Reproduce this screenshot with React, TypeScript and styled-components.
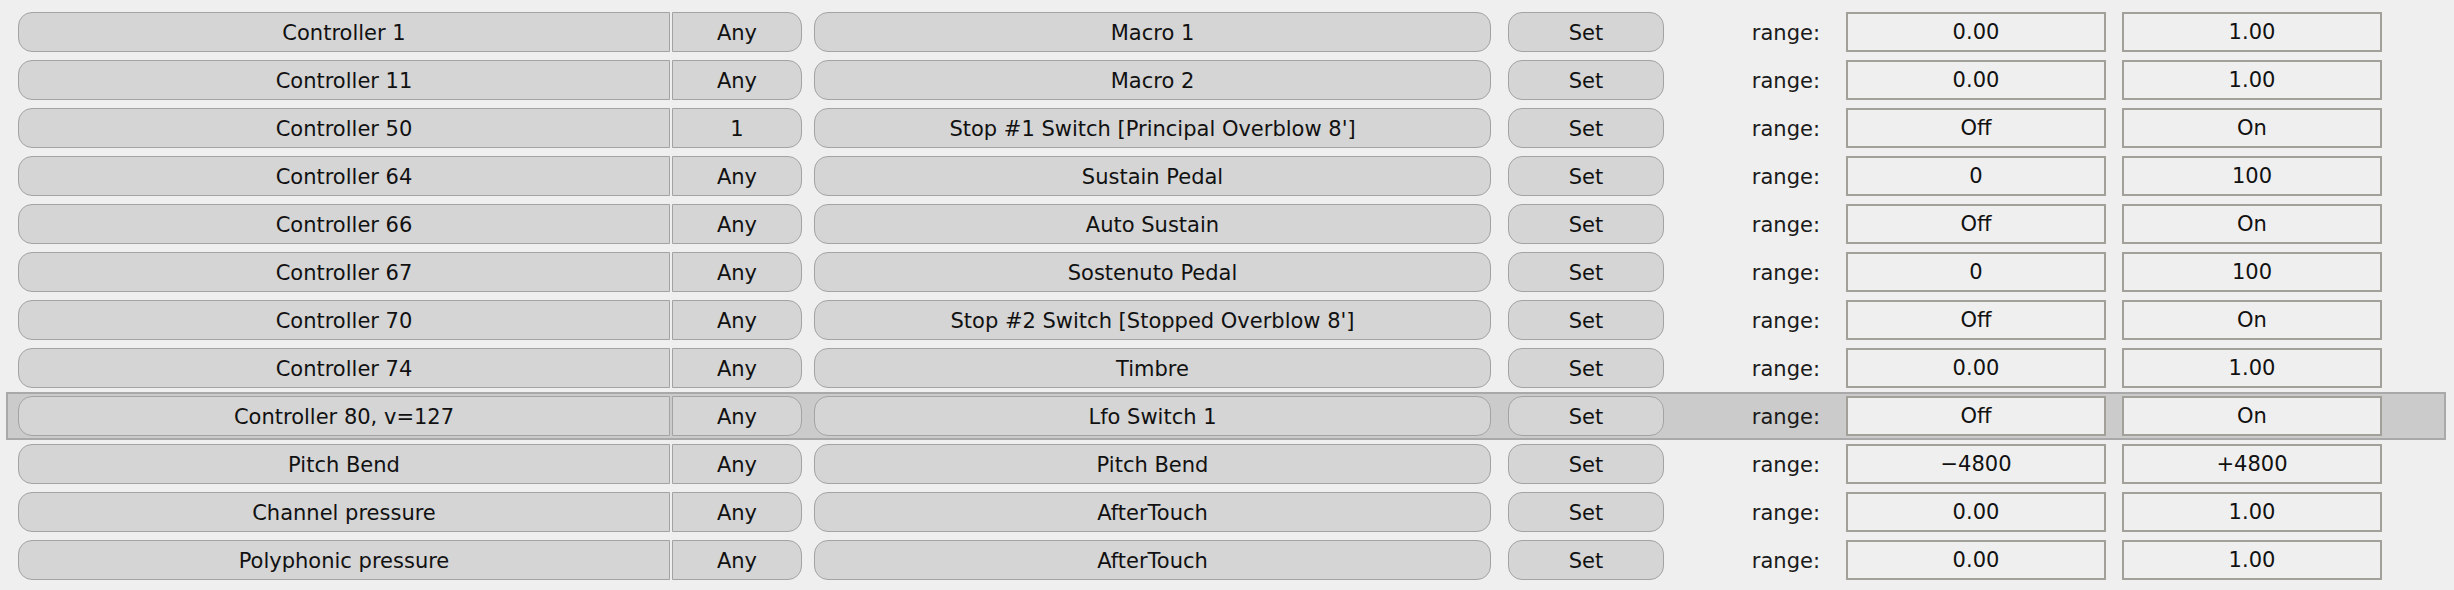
import React from "react";
import styled, { createGlobalStyle } from "styled-components";

const GlobalStyle = createGlobalStyle`
  html, body {
    margin: 0;
    padding: 0;
    background: #efefef;
  }
  body {
    font-family: "DejaVu Sans", "Liberation Sans", sans-serif;
  }
`;

const Page = styled.div`
  display: flex;
  flex-direction: column;
  padding: 8px 0 0 6px;
  width: 2454px;
  height: 590px;
  box-sizing: border-box;
  background: #efefef;
`;

const Row = styled.div<{ $selected?: boolean }>`
  display: flex;
  align-items: center;
  box-sizing: border-box;
  width: 2440px;
  height: 48px;
  padding: 2px 0 2px 10px;
  border: 2px solid ${(p) => (p.$selected ? "#a9a9a9" : "transparent")};
  background: ${(p) => (p.$selected ? "#cbcbcb" : "transparent")};
`;

const BaseButton = styled.button`
  box-sizing: border-box;
  height: 40px;
  margin: 0;
  padding: 2px 0 0 0;
  border: 1px solid #a3a3a3;
  background: #d5d5d5;
  color: #111111;
  font-family: "DejaVu Sans", "Liberation Sans", sans-serif;
  font-size: 21px;
  line-height: 36px;
  text-align: center;
  white-space: nowrap;
  flex: none;
`;

const SourceButton = styled(BaseButton)`
  width: 652px;
  border-radius: 14px 0 0 14px;
`;

const ChannelButton = styled(BaseButton)`
  width: 130px;
  margin-left: 2px;
  border-radius: 0 14px 14px 0;
`;

const TargetButton = styled(BaseButton)`
  width: 677px;
  margin-left: 12px;
  border-radius: 14px;
`;

const SetButton = styled(BaseButton)`
  width: 156px;
  margin-left: 17px;
  border-radius: 14px;
`;

const RangeLabel = styled.span`
  box-sizing: border-box;
  width: 182px;
  padding: 2px 26px 0 0;
  text-align: right;
  font-size: 21px;
  color: #1a1a1a;
  flex: none;
`;

const RangeBox = styled.div<{ $gap?: number }>`
  box-sizing: border-box;
  width: 260px;
  height: 40px;
  margin-left: ${(p) => p.$gap ?? 0}px;
  padding-top: 1px;
  border: 2px solid #a39f99;
  background: #efefef;
  color: #111111;
  font-size: 21px;
  line-height: 35px;
  text-align: center;
  flex: none;
`;

type Mapping = {
  source: string;
  channel: string;
  target: string;
  min: string;
  max: string;
};

const mappings: Mapping[] = [
  { source: "Controller 1", channel: "Any", target: "Macro 1", min: "0.00", max: "1.00" },
  { source: "Controller 11", channel: "Any", target: "Macro 2", min: "0.00", max: "1.00" },
  { source: "Controller 50", channel: "1", target: "Stop #1 Switch [Principal Overblow 8']", min: "Off", max: "On" },
  { source: "Controller 64", channel: "Any", target: "Sustain Pedal", min: "0", max: "100" },
  { source: "Controller 66", channel: "Any", target: "Auto Sustain", min: "Off", max: "On" },
  { source: "Controller 67", channel: "Any", target: "Sostenuto Pedal", min: "0", max: "100" },
  { source: "Controller 70", channel: "Any", target: "Stop #2 Switch [Stopped Overblow 8']", min: "Off", max: "On" },
  { source: "Controller 74", channel: "Any", target: "Timbre", min: "0.00", max: "1.00" },
  { source: "Controller 80, v=127", channel: "Any", target: "Lfo Switch 1", min: "Off", max: "On" },
  { source: "Pitch Bend", channel: "Any", target: "Pitch Bend", min: "\u22124800", max: "+4800" },
  { source: "Channel pressure", channel: "Any", target: "AfterTouch", min: "0.00", max: "1.00" },
  { source: "Polyphonic pressure", channel: "Any", target: "AfterTouch", min: "0.00", max: "1.00" },
];

const SELECTED = 8;

export default function App() {
  return (
    <>
      <GlobalStyle />
      <Page>
        {mappings.map((m, i) => (
          <Row key={i} $selected={i === SELECTED}>
            <SourceButton>{m.source}</SourceButton>
            <ChannelButton>{m.channel}</ChannelButton>
            <TargetButton>{m.target}</TargetButton>
            <SetButton>Set</SetButton>
            <RangeLabel>range:</RangeLabel>
            <RangeBox>{m.min}</RangeBox>
            <RangeBox $gap={16}>{m.max}</RangeBox>
          </Row>
        ))}
      </Page>
    </>
  );
}
